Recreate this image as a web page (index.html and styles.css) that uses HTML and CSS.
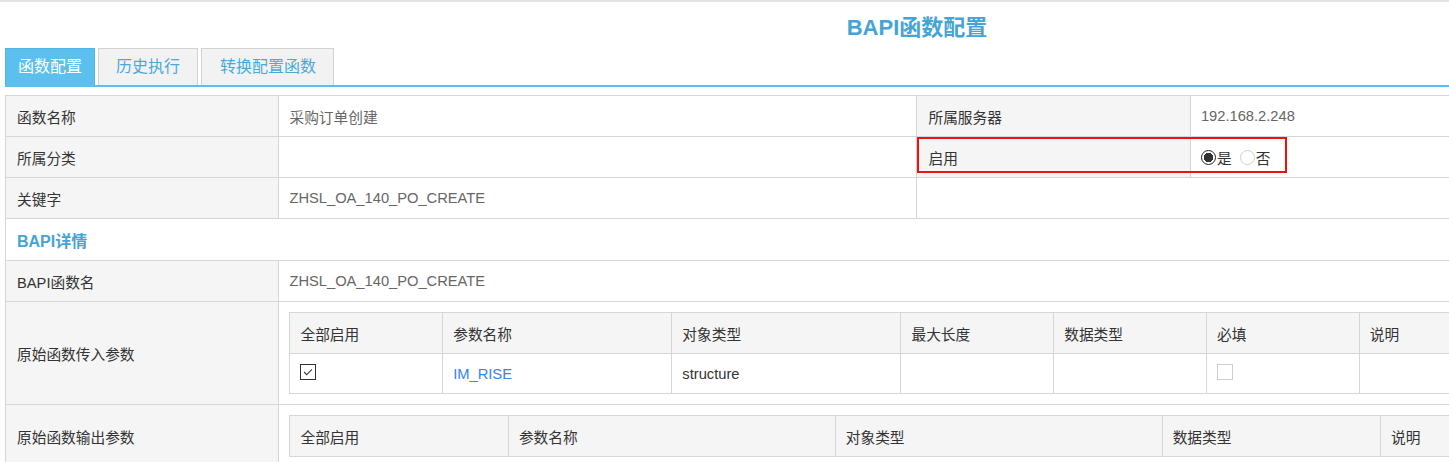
FILE: index.html
```html
<!DOCTYPE html>
<html lang="zh-CN">
<head>
<meta charset="utf-8">
<title>BAPI函数配置</title>
<link rel="stylesheet" href="styles.css">
</head>
<body>
<div class="viewport">
  <div class="page">
    <h1 class="title">BAPI函数配置</h1>
    <div class="tabs">
      <div class="tab tab-active">函数配置</div>
      <div class="tab tab-2">历史执行</div>
      <div class="tab tab-3">转换配置函数</div>
    </div>
    <div class="table-wrap">
      <table class="main">
        <colgroup>
          <col class="c15"><col class="c35"><col class="c15"><col class="c35">
        </colgroup>
        <tr>
          <td class="lbl">函数名称</td>
          <td class="val">采购订单创建</td>
          <td class="lbl">所属服务器</td>
          <td class="val">192.168.2.248</td>
        </tr>
        <tr>
          <td class="lbl">所属分类</td>
          <td class="val"></td>
          <td class="lbl">启用</td>
          <td class="val">
            <span class="radio-group">
              <span class="radio radio-on"></span><span class="radio-text">是</span>
              <span class="radio radio-off"></span><span class="radio-text">否</span>
            </span>
          </td>
        </tr>
        <tr>
          <td class="lbl">关键字</td>
          <td class="val">ZHSL_OA_140_PO_CREATE</td>
          <td class="blank" colspan="2"></td>
        </tr>
        <tr class="section-row">
          <td class="section" colspan="4">BAPI详情</td>
        </tr>
        <tr>
          <td class="lbl">BAPI函数名</td>
          <td class="val" colspan="3">ZHSL_OA_140_PO_CREATE</td>
        </tr>
        <tr>
          <td class="lbl">原始函数传入参数</td>
          <td class="nest-cell" colspan="3">
            <table class="sub sub-in">
              <colgroup>
                <col class="w10"><col class="w15"><col class="w15"><col class="w10"><col class="w10"><col class="w10"><col class="w30">
              </colgroup>
              <tr class="sub-head">
                <td>全部启用</td><td>参数名称</td><td>对象类型</td><td>最大长度</td><td>数据类型</td><td>必填</td><td>说明</td>
              </tr>
              <tr class="sub-data">
                <td><span class="cb cb-on"><svg viewBox="0 0 16 16" width="14" height="14"><polyline points="3.5,8 6.5,11 12.5,5" fill="none" stroke="#444" stroke-width="1.3"/></svg></span></td>
                <td><span class="link">IM_RISE</span></td>
                <td class="dark">structure</td>
                <td></td>
                <td></td>
                <td><span class="cb cb-off"></span></td>
                <td></td>
              </tr>
            </table>
          </td>
        </tr>
        <tr>
          <td class="lbl">原始函数输出参数</td>
          <td class="nest-cell" colspan="3">
            <table class="sub sub-out">
              <colgroup>
                <col class="o1"><col class="o2"><col class="o2"><col class="o1"><col class="o3">
              </colgroup>
              <tr class="sub-head">
                <td>全部启用</td><td>参数名称</td><td>对象类型</td><td>数据类型</td><td>说明</td>
              </tr>
            </table>
          </td>
        </tr>
      </table>
      <div class="highlight"></div>
    </div>
  </div>
</div>
</body>
</html>
```

FILE: styles.css
```css
html, body {
  margin: 0;
  padding: 0;
  background: #fff;
}
body {
  font-family: "Liberation Sans", "Noto Sans CJK SC", sans-serif;
  font-size: 14.7px;
  color: #333;
  border-top: 2px solid #e3e3e3;
}
.viewport {
  width: 100%;
  overflow: hidden;
}
.page {
  width: 1824px;
  margin-left: 5px;
}
.title {
  margin: 0;
  height: 46px;
  line-height: 52px;
  text-align: center;
  font-size: 22px;
  font-weight: bold;
  color: #45a4d6;
}
.tabs {
  display: flex;
  gap: 3px;
  height: 37px;
  border-bottom: 2px solid #5bc0ec;
}
.tab {
  box-sizing: border-box;
  height: 37px;
  line-height: 36px;
  font-size: 16px;
  color: #4aa9db;
  background: #f2f2f2;
  border: 1px solid #d2d2d2;
  border-bottom: none;
  padding: 0 17px;
}
.tab-active {
  background: #5bc0ee;
  border-color: #4fb5e6;
  color: #fff;
  padding: 0 12px;
}
.tab-3 {
  padding: 0 17px 0 18px;
}
.table-wrap {
  position: relative;
  margin-top: 8px;
}
table {
  border-collapse: collapse;
  table-layout: fixed;
  width: 100%;
}
td {
  border: 1px solid #d6d6d6;
  height: 40px;
  padding: 0 11px;
  vertical-align: middle;
  text-align: left;
}
.c15 { width: 15%; }
.c35 { width: 35%; }
.lbl {
  background: #f5f5f5;
  color: #333;
}
.val {
  color: #666;
  background: #fff;
  padding-left: 10px;
}
.section-row td {
  height: 41px;
}
.section {
  color: #45a4d6;
  font-weight: bold;
  font-size: 16px;
}
.nest-cell {
  padding: 10px;
}
.sub td {
  height: 40px;
  padding: 0 10px;
}
.sub .sub-data td {
  height: 39px;
}
.sub-head td {
  background: #f5f5f5;
  color: #333;
}
.w10 { width: 10%; }
.w15 { width: 15%; }
.w30 { width: 30%; }
.o1 { width: 14.3%; }
.o2 { width: 21.4%; }
.o3 { width: 28.6%; }
.dark { color: #333; }
.link { color: #3383f5; }
.cb {
  display: inline-block;
  box-sizing: border-box;
  width: 16px;
  height: 16px;
  vertical-align: middle;
  position: relative;
  top: -2px;
}
.cb-on {
  border: 1px solid #333;
}
.cb-on svg {
  display: block;
}
.cb-off {
  border: 1px solid #cfcfcf;
}
.radio-group {
  display: inline-flex;
  align-items: center;
}
.radio {
  display: inline-block;
  box-sizing: border-box;
  width: 15px;
  height: 15px;
  border-radius: 50%;
}
.radio-on {
  border: 1.5px solid #222;
  background: radial-gradient(circle, #333 0 4.5px, #fff 5px);
}
.radio-off {
  border: 1px solid #d0d0d0;
  margin-left: 8px;
}
.radio-text {
  color: #333;
  margin-left: 1px;
}
.highlight {
  position: absolute;
  left: 912px;
  top: 42px;
  width: 370px;
  height: 36px;
  box-sizing: border-box;
  border: 2px solid #f01010;
  pointer-events: none;
}
```
